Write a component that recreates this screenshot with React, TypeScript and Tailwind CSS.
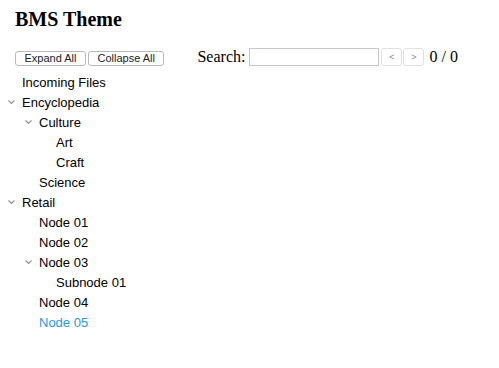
import React from 'react';

interface TreeNode {
  label: string;
  children?: TreeNode[];
  active?: boolean;
}

const tree: TreeNode[] = [
  { label: 'Incoming Files' },
  {
    label: 'Encyclopedia',
    children: [
      { label: 'Culture', children: [{ label: 'Art' }, { label: 'Craft' }] },
      { label: 'Science' },
    ],
  },
  {
    label: 'Retail',
    children: [
      { label: 'Node 01' },
      { label: 'Node 02' },
      { label: 'Node 03', children: [{ label: 'Subnode 01' }] },
      { label: 'Node 04' },
      { label: 'Node 05', active: true },
    ],
  },
];

const indents = ['pl-[8px]', 'pl-[25px]', 'pl-[42px]'];

const Chevron = () => (
  <svg width="7" height="4" viewBox="0 0 7 4" className="mt-[7px]">
    <path d="M0.5 0.5 L3.5 3.4 L6.5 0.5" fill="none" stroke="#8c8c8c" strokeWidth="1.1" />
  </svg>
);

const Row: React.FC<{ node: TreeNode; level: number }> = ({ node, level }) => (
  <>
    <div className={`flex items-start h-[20px] ${indents[level]}`}>
      <div className="w-[14px] shrink-0">{node.children && <Chevron />}</div>
      <span className={`leading-[20px] ${node.active ? 'text-[#1e9be3]' : 'text-black'}`}>{node.label}</span>
    </div>
    {node.children?.map((c) => <Row key={c.label} node={c} level={level + 1} />)}
  </>
);

const App: React.FC = () => {
  return (
    <div className="w-[499px] h-[368px] bg-white px-[15px] pt-[8px] font-['Liberation_Serif',serif] text-black">
      <h1 className="text-[20px] leading-[23px] font-bold">BMS Theme</h1>

      <div className="flex items-start mt-[17px] h-[20px]">
        <button className="mt-[3px] h-[15px] px-[8.5px] bg-white border border-[#b9b9b9] rounded-[3px] font-['Liberation_Sans',sans-serif] text-[11px] leading-[13px] text-[#222]">
          Expand All
        </button>
        <button className="mt-[3px] ml-[2px] h-[15px] px-[8.5px] bg-white border border-[#b9b9b9] rounded-[3px] font-['Liberation_Sans',sans-serif] text-[11px] leading-[13px] text-[#222]">
          Collapse All
        </button>
        <span className="ml-[33px] text-[16px] leading-[18px]">Search:</span>
        <input type="text" className="ml-[4px] w-[130px] h-[18px] border border-[#c8c8c8] bg-white outline-none" />
        <button className="ml-[2px] w-[21px] h-[18px] border border-[#e0e0e0] rounded-[3px] bg-white font-['Liberation_Sans',sans-serif] text-[9px] leading-[16px] text-[#888]">
          &lt;
        </button>
        <button className="ml-[1px] w-[21px] h-[18px] border border-[#e0e0e0] rounded-[3px] bg-white font-['Liberation_Sans',sans-serif] text-[9px] leading-[16px] text-[#888]">
          &gt;
        </button>
        <span className="ml-[5px] text-[16px] leading-[18px]">0 / 0</span>
      </div>

      <div className="-ml-[15px] mt-[5px] font-['Liberation_Sans',sans-serif] text-[13px]">
        {tree.map((n) => (
          <Row key={n.label} node={n} level={0} />
        ))}
      </div>
    </div>
  );
};

export default App;
